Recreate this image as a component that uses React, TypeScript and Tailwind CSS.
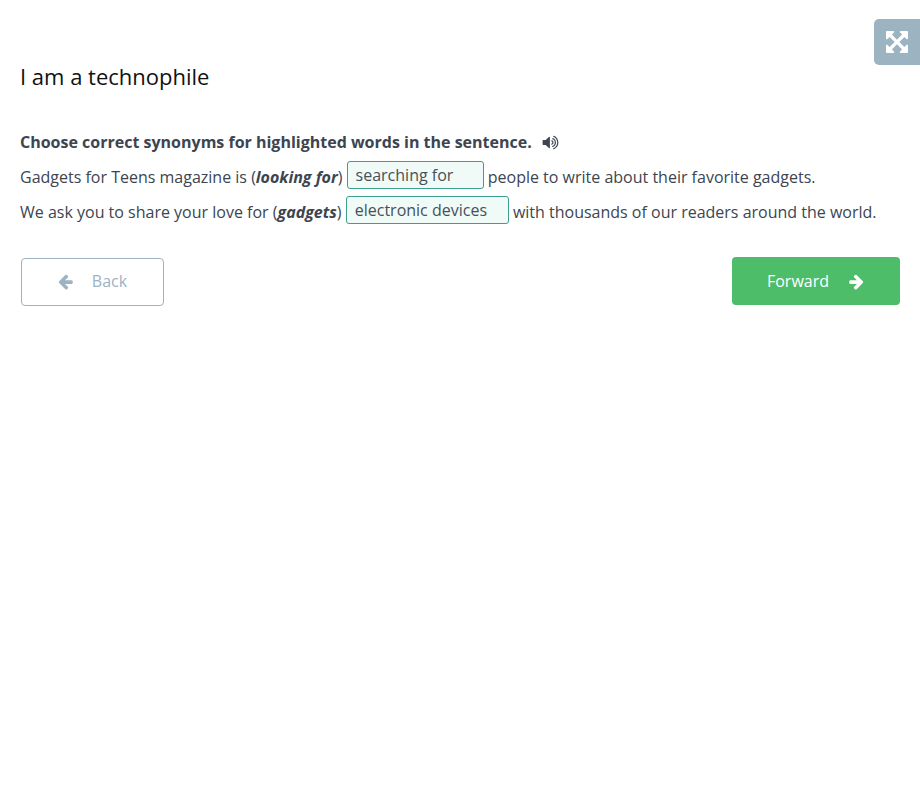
function Blank({ value, width }: { value: string; width: string }) {
  return (
    <span
      className={`inline-block h-[28px] rounded-[3px] border border-[#3a9f8c] bg-[#f0faf6] pl-[8px] text-left align-[2px] leading-[27px] text-[#46505c] ${width}`}
    >
      {value}
    </span>
  );
}

function ArrowRight({ className }: { className?: string }) {
  return (
    <svg viewBox="0 0 1792 1792" fill="currentColor" className={className}>
      <path d="M1600 960q0 54-37 91l-651 651q-39 37-91 37-52 0-90-37l-75-75q-38-38-38-91t38-91l293-293h-704q-52 0-84.500-37.500t-32.500-90.500v-128q0-53 32.500-90.500t84.500-37.500h704l-293-294q-38-36-38-90t38-90l75-75q38-38 90-38 53 0 91 38l651 651q37 35 37 90z" />
    </svg>
  );
}

function ExpandIcon() {
  return (
    <svg viewBox="0 128 1536 1536" fill="currentColor" className="h-[22px] w-[22px]">
      <path d="M1283 541l-355 355 355 355 144-144q29-31 70-14 39 17 39 59v448q0 26-19 45t-45 19h-448q-42 0-59-40-17-39 14-69l144-144-355-355-355 355 144 144q31 30 14 69-17 40-59 40h-448q-26 0-45-19t-19-45v-448q0-42 40-59 39-17 69 14l144 144 355-355-355-355-144 144q-19 19-45 19-12 0-24-5-40-17-40-59v-448q0-26 19-45t45-19h448q42 0 59 40 17 39-14 69l-144 144 355 355 355-355-144-144q-31-30-14-69 17-40 59-40h448q26 0 45 19t19 45v448q0 42-39 59-13 5-25 5-26 0-45-19z" />
    </svg>
  );
}

function VolumeIcon() {
  return (
    <svg viewBox="0 0 1792 1792" fill="currentColor" className="ml-[10px] h-[17px] w-[17px]">
      <path d="M832 352v1088q0 26-19 45t-45 19-45-19l-333-333h-262q-26 0-45-19t-19-45v-384q0-26 19-45t45-19h262l333-333q19-19 45-19t45 19 19 45zm384 544q0 76-42.500 141.500t-112.500 93.500q-10 5-25 5-26 0-45-18.500t-19-45.500q0-21 12-35.500t29-25 34-23 29-35.500 12-57-12-57-29-35.500-34-23-29-25-12-35.500q0-27 19-45.500t45-18.500q15 0 25 5 70 27 112.500 93t42.500 142zm256 0q0 153-85 282.500t-225 188.500q-13 5-25 5-27 0-46-19t-19-45q0-39 39-59 56-29 76-44 74-54 115.500-135.500t41.500-173.500-41.500-173.500-115.500-135.500q-20-15-76-44-39-20-39-59 0-26 19-45t45-19q13 0 26 5 140 59 225 188.500t85 282.500zm256 0q0 230-127 422.500t-338 283.500q-13 5-26 5-26 0-45-19t-19-45q0-36 39-59 7-4 22.500-10.500t22.500-10.500q46-25 82-51 123-91 192-227t69-289-69-289-192-227q-36-26-82-51-7-4-22.500-10.500t-22.500-10.500q-39-23-39-59 0-26 19-45t45-19q13 0 26 5 211 91 338 283.500t127 422.500z" />
    </svg>
  );
}

export default function App() {
  return (
    <div className="relative min-h-[807px] bg-white px-[20px] font-['Open_Sans',sans-serif] text-[16px] text-[#3c4550]">
      <button className="absolute right-0 top-[19px] flex h-[46px] w-[46px] items-center justify-center rounded-l-[5px] bg-[#9cb3c2] text-white">
        <ExpandIcon />
      </button>

      <h1 className="pt-[61px] text-[22px] leading-[30px] text-[#111]">I am a technophile</h1>

      <p className="mt-[39px] flex h-[24px] items-center font-bold leading-[24px]">
        Choose correct synonyms for highlighted words in the sentence.
        <VolumeIcon />
      </p>

      <p className="mt-[6px] h-[35px] leading-[35px] whitespace-nowrap">
        Gadgets for Teens magazine is (<b className="italic">looking for</b>) <Blank value="searching for" width="w-[137px]" /> people to write about their favorite gadgets.
      </p>
      <p className="h-[35px] leading-[35px] whitespace-nowrap">
        We ask you to share your love for (<b className="italic">gadgets</b>) <Blank value="electronic devices" width="w-[163px]" /> with thousands of our readers around the world.
      </p>

      <div className="mt-[27px] flex items-start justify-between">
        <button className="ml-[1px] mt-[1px] flex h-[48px] w-[143px] items-center justify-center gap-[18px] rounded-[4px] border border-[#9cb3c2] bg-white pb-[2px] pr-[1px] text-[#9cb3c2]">
          <ArrowRight className="h-[17px] w-[17px] -scale-x-100" />
          Back
        </button>
        <button className="flex h-[48px] w-[168px] items-center justify-center gap-[19px] rounded-[4px] bg-[#4dbd6a] text-white">
          Forward
          <ArrowRight className="h-[17px] w-[17px]" />
        </button>
      </div>
    </div>
  );
}
